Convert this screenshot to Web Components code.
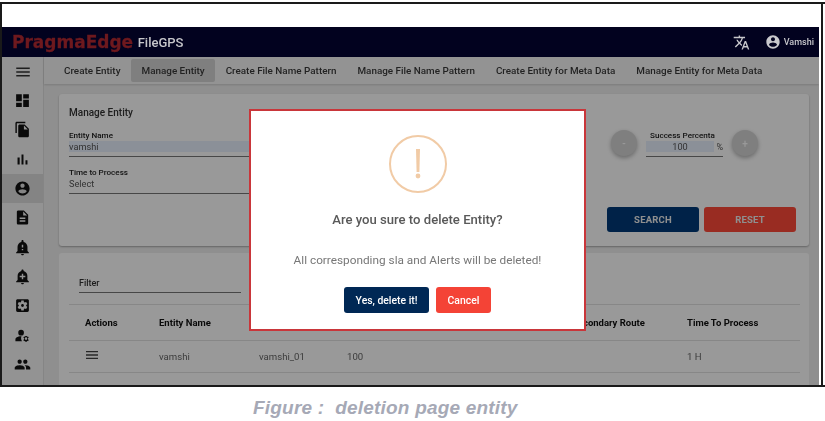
<!DOCTYPE html>
<html>
<head>
<meta charset="utf-8">
<title>Manage Entity</title>
<style>
	html, body { margin: 0; padding: 0; background: #fff; }
	body { font-family: Roboto, "Liberation Sans", sans-serif; width: 825px; height: 421px; overflow: hidden; }
</style>
</head>
<body>
<doc-page>
	<app-shell>
		<app-header slot="header"></app-header>
		<side-nav slot="side"></side-nav>
		<nav-tabs slot="tabs"></nav-tabs>
		<search-card></search-card>
		<entity-table></entity-table>
		<confirm-dialog slot="dialog" heading="Are you sure to delete Entity?">All corresponding sla and Alerts will be deleted!</confirm-dialog>
	</app-shell>
	<span slot="caption">Figure :&nbsp; deletion page entity</span>
</doc-page>

<script>
const ICONS = {
	menu: 'M3 18h18v-2H3v2zm0-5h18v-2H3v2zm0-7v2h18V6H3z',
	dashboard: 'M3 13h8V3H3v10zm0 8h8v-6H3v6zm10 0h8V11h-8v10zm0-18v6h8V3h-8z',
	copy: 'M16 1H4c-1.1 0-2 .9-2 2v14h2V3h12V1zm-1 4l6 6v10c0 1.1-.9 2-2 2H7.99C6.89 23 6 22.1 6 21l.01-14c0-1.1.89-2 1.99-2h7zm-1 7h5.5L14 6.5V12z',
	bars: 'M5 9.2h3V19H5zM10.6 5h2.8v14h-2.8zm5.6 8H19v6h-2.8z',
	account: 'M12 2C6.48 2 2 6.48 2 12s4.48 10 10 10 10-4.48 10-10S17.52 2 12 2zm0 3c1.66 0 3 1.34 3 3s-1.34 3-3 3-3-1.34-3-3 1.34-3 3-3zm0 14.2c-2.5 0-4.71-1.28-6-3.22.03-1.99 4-3.08 6-3.08 1.99 0 5.97 1.09 6 3.08-1.29 1.94-3.5 3.22-6 3.22z',
	doc: 'M14 2H6c-1.1 0-1.99.9-1.99 2L4 20c0 1.1.89 2 1.99 2H18c1.1 0 2-.9 2-2V8l-6-6zm2 16H8v-2h8v2zm0-4H8v-2h8v2zm-3-5V3.5L18.5 9H13z',
	bell: 'M12 23c1.1 0 1.99-.89 1.99-1.99h-3.98c0 1.1.89 1.99 1.99 1.99zm7-6v-6c0-3.35-2.36-6.15-5.5-6.83V3c0-.83-.67-1.5-1.5-1.5s-1.5.67-1.5 1.5v1.17C7.36 4.85 5 7.65 5 11v6l-2 2v1h18v-1l-2-2zm-6-1h-2v-2h2v2zm0-4h-2V8h2v4z',
	bellplus: 'M10.01 21.01c0 1.1.89 1.99 1.99 1.99s1.99-.89 1.99-1.99h-3.98zm8.87-4.19V11c0-3.25-2.25-5.97-5.29-6.69v-.72C13.59 2.71 12.88 2 12 2s-1.59.71-1.59 1.59v.72C7.37 5.03 5.12 7.75 5.12 11v5.82L3 18.94V20h18v-1.06l-2.12-2.12zM16 13.01h-3v3h-2v-3H8V11h3V8h2v3h3v2.01z',
	gearbox: 'M12 10c-1.1 0-2 .9-2 2s.9 2 2 2 2-.9 2-2-.9-2-2-2zm7-7H5c-1.11 0-2 .9-2 2v14c0 1.1.89 2 2 2h14c1.11 0 2-.9 2-2V5c0-1.1-.89-2-2-2zm-1.75 9c0 .23-.02.46-.05.68l1.48 1.16c.13.11.17.3.08.45l-1.4 2.42c-.09.15-.27.21-.43.15l-1.74-.7c-.36.28-.76.51-1.18.69l-.26 1.85c-.03.17-.18.3-.35.3h-2.8c-.17 0-.32-.13-.35-.29l-.26-1.85c-.43-.18-.82-.41-1.18-.69l-1.74.7c-.16.06-.34 0-.43-.15l-1.4-2.42c-.09-.15-.05-.34.08-.45l1.48-1.16c-.03-.23-.05-.46-.05-.69 0-.23.02-.46.05-.68l-1.48-1.16c-.13-.11-.17-.3-.08-.45l1.4-2.42c.09-.15.27-.21.43-.15l1.74.7c.36-.28.76-.51 1.18-.69l.26-1.85c.03-.17.18-.3.35-.3h2.8c.17 0 .32.13.35.29l.26 1.85c.43.18.82.41 1.18.69l1.74-.7c.16-.06.34 0 .43.15l1.4 2.42c.09.15.05.34-.08.45l-1.48 1.16c.03.23.05.46.05.69z',
	persongear: 'M10 4a4 4 0 1 1 0 8 4 4 0 0 1 0-8zM10.67 13.02C10.45 13.01 10.23 13 10 13c-2.42 0-4.68.67-6.61 1.82C2.51 15.34 2 16.32 2 17.35V20h9.26c-.79-1.13-1.26-2.51-1.26-4 0-1.07.25-2.07.67-2.98zM18 12.6l.5 1.3 1.3-.5 1 1.7-1.1.9v1.4l1.1.9-1 1.7-1.3-.5-.5 1.3h-2l-.5-1.3-1.3.5-1-1.7 1.1-.9v-1.4l-1.1-.9 1-1.7 1.3.5.5-1.3h2zM17 14.6a1.8 1.8 0 1 0 0 3.6 1.8 1.8 0 0 0 0-3.6z',
	people: 'M16 11c1.66 0 2.99-1.34 2.99-3S17.66 5 16 5c-1.66 0-3 1.34-3 3s1.34 3 3 3zm-8 0c1.66 0 2.99-1.34 2.99-3S9.66 5 8 5C6.34 5 5 6.34 5 8s1.34 3 3 3zm0 2c-2.33 0-7 1.17-7 3.5V19h14v-2.5c0-2.33-4.67-3.5-7-3.5zm8 0c-.29 0-.62.02-.97.05 1.16.84 1.97 1.97 1.97 3.45V19h6v-2.5c0-2.33-4.67-3.5-7-3.5z',
	translate: 'M12.87 15.07l-2.54-2.51.03-.03c1.74-1.94 2.98-4.17 3.71-6.53H17V4h-7V2H8v2H1v1.99h11.17C11.5 7.92 10.44 9.75 9 11.35 8.07 10.32 7.3 9.19 6.69 8h-2c.73 1.63 1.73 3.17 2.98 4.56l-5.09 5.02L4 19l5-5 3.11 3.11.76-2.04zM18.5 10h-2L12 22h2l1.12-3h4.75L21 22h2l-4.5-12zm-2.62 7l1.62-4.33L19.12 17h-3.24z'
}

class UiIcon extends HTMLElement {
	connectedCallback() {
		const size = this.getAttribute('size') || 18
		this.attachShadow({ mode: 'open' })
		this.shadowRoot.innerHTML = `
			<style>
				:host { display: inline-flex; color: inherit; }
			</style>
			<svg width="${size}" height="${size}" viewBox="0 0 24 24" fill="currentColor"><path fill-rule="evenodd" d="${ICONS[this.getAttribute('name')]}"/></svg>
		`
	}
}

class DocPage extends HTMLElement {
	constructor() {
		super()
		this.attachShadow({ mode: 'open' })
		this.shadowRoot.innerHTML = `
			<style>
				:host { display: block; padding-top: 2px; }
				.sheet {
					border-top: 2px solid #1a1a1a;
					border-bottom: 2px solid #1a1a1a;
					border-left: 2px solid #1a1a1a;
					background: #fff;
				}
				.inset {
					width: 821px;
					height: 381px;
					box-sizing: border-box;
					padding-top: 23px;
					border-right: 2px solid #1a1a1a;
					overflow: hidden;
				}
				.caption {
					margin-top: 10px;
					padding-left: 253px;
					font: italic bold 19px/22px "Liberation Sans", sans-serif;
					letter-spacing: .2px;
					color: #a6a9b6;
				}
			</style>
			<div class="sheet"><div class="inset"><slot></slot></div></div>
			<div class="caption"><slot name="caption"></slot></div>
		`
	}
}

class AppShell extends HTMLElement {
	constructor() {
		super()
		this.attachShadow({ mode: 'open' })
		this.shadowRoot.innerHTML = `
			<style>
				:host {
					display: block;
					position: relative;
					width: 817px;
					height: 358px;
					overflow: hidden;
					filter: blur(.4px);
				}
				.body { display: flex; height: 328px; background: #efefef; }
				.main { flex: 1; min-width: 0; }
				.content { padding: 10px 10px 0 15px; display: flex; flex-direction: column; gap: 7px; }
				.scrim {
					position: absolute;
					inset: 30px 0 0 0;
					background: rgba(0, 0, 0, .4);
					padding: 52px 0 0 247px;
				}
			</style>
			<slot name="header"></slot>
			<div class="body">
				<slot name="side"></slot>
				<div class="main">
					<slot name="tabs"></slot>
					<div class="content"><slot></slot></div>
				</div>
			</div>
			<div class="scrim"><slot name="dialog"></slot></div>
		`
	}
}

class AppHeader extends HTMLElement {
	constructor() {
		super()
		this.attachShadow({ mode: 'open' })
		this.shadowRoot.innerHTML = `
			<style>
				:host {
					display: flex;
					align-items: center;
					height: 30px;
					padding: 0 5px 0 10px;
					background: #02021f;
				}
				.logo {
					font: bold 17px "DejaVu Sans", sans-serif;
					color: #6e191e;
					-webkit-text-stroke: .3px #6e191e;
				}
				.product {
					margin-left: 4.5px;
					font: 500 13px Roboto, sans-serif;
					color: #c6c6ca;
				}
				.right { margin-left: auto; display: flex; align-items: center; color: #c8c8cc; }
				.user { margin: 0 3px 0 15px; }
				.name { font: 500 9px Roboto, sans-serif; }
			</style>
			<span class="logo">PragmaEdge</span>
			<span class="product">FileGPS</span>
			<div class="right">
				<ui-icon name="translate" size="17"></ui-icon>
				<ui-icon class="user" name="account" size="16"></ui-icon>
				<span class="name">Vamshi</span>
			</div>
		`
	}
}

class SideNav extends HTMLElement {
	constructor() {
		super()
		this.attachShadow({ mode: 'open' })
		const items = ['dashboard', 'copy', 'bars', 'account', 'doc', 'bell', 'bellplus', 'gearbox', 'persongear', 'people']
		this.shadowRoot.innerHTML = `
			<style>
				:host {
					display: block;
					flex: 0 0 41px;
					width: 41px;
					background: #f6f6f6;
					border-right: 1px solid #dedede;
					color: #111;
					overflow: hidden;
				}
				.top { height: 29px; display: flex; align-items: center; justify-content: center; color: #333; }
				.item { height: 29.3px; display: flex; align-items: center; justify-content: center; }
				.item.active { background: #dcdcdc; }
			</style>
			<div class="top"><ui-icon name="menu" size="18"></ui-icon></div>
			${items.map(n => `<div class="item ${n === 'account' ? 'active' : ''}"><ui-icon name="${n}" size="17"></ui-icon></div>`).join('')}
		`
	}
}

class NavTabs extends HTMLElement {
	constructor() {
		super()
		this.attachShadow({ mode: 'open' })
		const tabs = ['Create Entity', 'Manage Entity', 'Create File Name Pattern', 'Manage File Name Pattern', 'Create Entity for Meta Data', 'Manage Entity for Meta Data']
		this.shadowRoot.innerHTML = `
			<style>
				:host {
					display: flex;
					align-items: center;
					height: 27px;
					padding-left: 9.5px;
					background: #f6f6f6;
					box-shadow: 0 1px 2px rgba(0, 0, 0, .15);
				}
				.tab {
					height: 23px;
					display: flex;
					align-items: center;
					padding: 0 10.5px;
					border-radius: 2px;
					font: 500 9.9px Roboto, sans-serif;
					color: #3a3a3a;
					white-space: nowrap;
				}
				.tab.active { background: #d4d4d4; }
			</style>
			${tabs.map((t, i) => `<span class="tab ${i === 1 ? 'active' : ''}">${t}</span>`).join('')}
		`
	}
}

class TextField extends HTMLElement {
	constructor() {
		super()
		this.attachShadow({ mode: 'open' })
		this.shadowRoot.innerHTML = `
			<style>
				:host { display: block; font-family: Roboto, sans-serif; }
				.label {
					padding-left: var(--label-pad, 0);
					width: var(--label-width, auto);
					font: 500 8.1px/11px Roboto, sans-serif;
					color: #222;
					white-space: nowrap;
					overflow: hidden;
				}
				.value {
					width: var(--value-width, auto);
					font-size: 9.2px;
					line-height: 11px;
					color: var(--value-color, #555);
					background: var(--value-bg, transparent);
					text-align: var(--value-align, left);
				}
				.line { height: 1px; margin-top: 4px; background: #777; }
			</style>
			<div class="label">${this.getAttribute('label')}</div>
			<div class="value"><slot></slot></div>
			<div class="line"></div>
		`
	}
}

class SearchCard extends HTMLElement {
	constructor() {
		super()
		this.attachShadow({ mode: 'open' })
		this.shadowRoot.innerHTML = `
			<style>
				:host {
					display: block;
					height: 152px;
					box-sizing: border-box;
					padding: 12px 13px 0 10px;
					background: #fff;
					border-radius: 3px;
					box-shadow: 0 1px 2px rgba(0, 0, 0, .3);
				}
				.title { font: 500 10px/14px Roboto, sans-serif; color: #333; }
				.form { display: grid; grid-template-columns: 261px 1fr; margin-top: 9.5px; }
				.left { display: flex; flex-direction: column; gap: 10px; }
				.left text-field.auto { --value-bg: #e8f0fe; }
				.stepper { display: flex; align-items: center; justify-content: flex-end; gap: 9px; height: 27px; margin-right: 38px; }
				.round {
					width: 26px;
					height: 26px;
					border-radius: 50%;
					background: #d4d4d4;
					box-shadow: 0 2px 4px rgba(0, 0, 0, .3);
					display: flex;
					align-items: center;
					justify-content: center;
					font: 500 10px Roboto, sans-serif;
					color: #fff;
				}
				.pct {
					position: relative;
					width: 77px;
					--value-bg: #e8f0fe;
					--value-align: center;
					--value-width: 68px;
					--label-pad: 4px;
					--label-width: 65px;
				}
				.unit { position: absolute; right: 0; top: 12px; font: 9px/11px Roboto, sans-serif; color: #555; }
				.actions { display: flex; justify-content: flex-end; gap: 5px; margin-top: 13.5px; }
				.btn {
					width: 92px;
					height: 25px;
					display: flex;
					align-items: center;
					justify-content: center;
					border-radius: 3px;
					font: 700 9.5px Roboto, sans-serif;
					color: #eee;
					letter-spacing: .2px;
				}
				.search { background: #003a78; }
				.reset { background: #ff4a39; }
			</style>
			<div class="title">Manage Entity</div>
			<div class="form">
				<div class="left">
					<text-field class="auto" label="Entity Name">vamshi</text-field>
					<text-field label="Time to Process">Select</text-field>
				</div>
				<div class="stepper">
					<span class="round">-</span>
					<div class="pct">
						<text-field label="Success Percentage">100</text-field>
						<span class="unit">%</span>
					</div>
					<span class="round">+</span>
				</div>
			</div>
			<div class="actions">
				<span class="btn search">SEARCH</span>
				<span class="btn reset">RESET</span>
			</div>
		`
	}
}

class EntityTable extends HTMLElement {
	constructor() {
		super()
		this.attachShadow({ mode: 'open' })
		this.shadowRoot.innerHTML = `
			<style>
				:host {
					display: block;
					height: 160px;
					background: #fff;
					border-radius: 3px;
					padding: 0 9px 0 10px;
					font-family: Roboto, sans-serif;
				}
				.filter { height: 51px; box-sizing: border-box; padding: 23px 0 0 10px; }
				.filter div {
					width: 162px;
					height: 16px;
					border-bottom: 1px solid #777;
					font: 500 9px/14px Roboto, sans-serif;
					color: #333;
				}
				.row {
					display: grid;
					grid-template-columns: 90px 100px 88px 225px 115px 1fr;
					align-items: center;
					border-top: 1px solid #e2e2e2;
					font-size: 9.6px;
					color: #666;
				}
				.head { height: 35px; font-weight: 700; color: #111; font-size: 9.5px; }
				.data { height: 32px; padding-bottom: 1px; box-sizing: border-box; }
				.row > :first-child { padding-left: 16px; }
				.end { border-top: 1px solid #e2e2e2; }
				.tiny { color: #444; }
				.tiny ui-icon { margin-left: -1px; }
			</style>
			<div class="filter"><div>Filter</div></div>
			<div class="row head">
				<span>Actions</span><span>Entity Name</span><span></span><span></span><span>Secondary Route</span><span>Time To Process</span>
			</div>
			<div class="row data">
				<span class="tiny"><ui-icon name="menu" size="16"></ui-icon></span><span>vamshi</span><span>vamshi_01</span><span>100</span><span></span><span>1 H</span>
			</div>
			<div class="end"></div>
		`
	}
}

class ConfirmDialog extends HTMLElement {
	constructor() {
		super()
		this.attachShadow({ mode: 'open' })
		this.shadowRoot.innerHTML = `
			<style>
				:host {
					display: block;
					width: 337px;
					height: 222px;
					box-sizing: border-box;
					border: 2.5px solid #c9363a;
					background: #fff;
					text-align: center;
					font-family: Roboto, sans-serif;
				}
				svg { display: block; margin: 23px auto 0; }
				h2 { margin: 18px 0 0; font: 500 13.1px/16px Roboto, sans-serif; color: #595959; }
				p { margin: 24px 0 0; font: 400 11.8px/16px Roboto, sans-serif; color: #777; }
				.buttons { display: flex; justify-content: center; gap: 7px; margin-top: 19px; }
				.btn {
					height: 26px;
					display: flex;
					align-items: center;
					padding: 0 11.5px;
					border-radius: 3px;
					font: 500 10.4px Roboto, sans-serif;
					color: #fff;
				}
				.yes { background: #002855; }
				.no { background: #f44336; }
			</style>
			<svg width="60" height="60" viewBox="0 0 60 60">
				<circle cx="30" cy="30" r="28" fill="none" stroke="#f1cba6" stroke-width="2"/>
				<path d="M28 15h4l-.6 23h-2.8z" fill="#f1cba6"/>
				<circle cx="30" cy="42" r="2.4" fill="#f1cba6"/>
			</svg>
			<h2>${this.getAttribute('heading')}</h2>
			<p><slot></slot></p>
			<div class="buttons">
				<span class="btn yes">Yes, delete it!</span>
				<span class="btn no">Cancel</span>
			</div>
		`
	}
}

customElements.define('ui-icon', UiIcon)
customElements.define('doc-page', DocPage)
customElements.define('app-shell', AppShell)
customElements.define('app-header', AppHeader)
customElements.define('side-nav', SideNav)
customElements.define('nav-tabs', NavTabs)
customElements.define('text-field', TextField)
customElements.define('search-card', SearchCard)
customElements.define('entity-table', EntityTable)
customElements.define('confirm-dialog', ConfirmDialog)
</script>
</body>
</html>
